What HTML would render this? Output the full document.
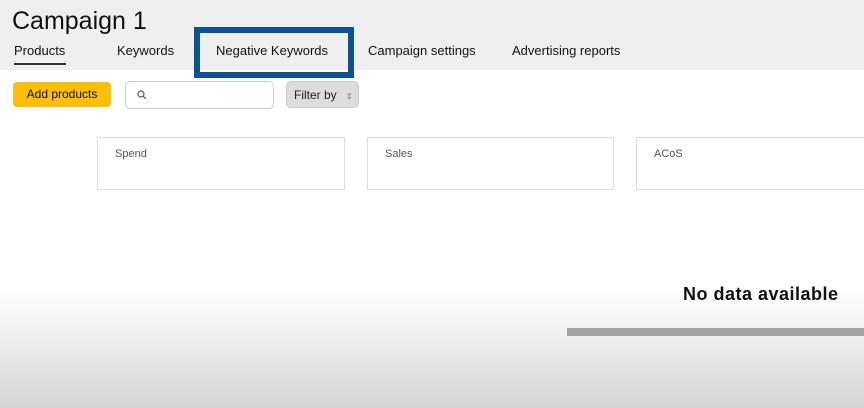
<!DOCTYPE html>
<html><head><style>
body{margin:0;width:864px;height:408px;overflow:hidden;position:relative;font-family:"Liberation Sans",sans-serif;background:linear-gradient(#fff 0,#fff 285px,#f2f2f2 330px,#d4d4d4 408px);}
.hdr{position:absolute;left:0;top:0;width:864px;height:70px;background:#efefef;}
.t{position:absolute;left:12px;top:7px;font-size:25px;color:#111;}
.tab{position:absolute;top:43px;font-size:13px;color:#111;}
.ul{position:absolute;left:14px;top:63px;width:52px;height:2px;background:#333;}
.box{position:absolute;left:194px;top:27px;width:148px;height:39px;border:6px solid #0b5394;}
.btn{position:absolute;left:13px;top:82px;width:98px;height:25px;background:#fbbf0a;border-radius:4px;font-size:12px;text-align:center;line-height:25px;color:#111;}
.srch{position:absolute;left:125px;top:81px;width:147px;height:26px;border:1px solid #ccc;border-radius:5px;background:#fff;}
.flt{position:absolute;left:286px;top:81px;width:73px;height:27px;background:#ddd;border:1px solid #ccc;border-radius:5px;font-size:12px;line-height:27px;color:#222;box-sizing:border-box;padding-left:7px;}
.card{position:absolute;top:137px;height:53px;border:1px solid #ddd;background:#fff;box-sizing:border-box;font-size:11px;color:#555;padding:10px 0 0 17px;}
.nd{position:absolute;left:683px;top:284px;font-size:18px;font-weight:bold;color:#111;letter-spacing:0.5px;}
.bar{position:absolute;left:567px;top:328px;width:297px;height:8px;background:#a3a3a3;}
</style></head><body>
<div class="hdr"></div>
<div class="t">Campaign 1</div>
<div class="tab" style="left:14px">Products</div>
<div class="ul"></div>
<div class="tab" style="left:117px">Keywords</div>
<div class="tab" style="left:216px">Negative Keywords</div>
<div class="tab" style="left:368px">Campaign settings</div>
<div class="tab" style="left:512px">Advertising reports</div>
<div class="box"></div>
<div class="btn">Add products</div>
<div class="srch"><svg width="10" height="10" style="position:absolute;left:11px;top:8px" viewBox="0 0 10 10"><circle cx="4" cy="4" r="3" fill="none" stroke="#555" stroke-width="1.2"/><line x1="6.2" y1="6.2" x2="9" y2="9" stroke="#555" stroke-width="1.2"/></svg></div>
<div class="flt">Filter by <span style="font-size:8px;color:#777;margin-left:6px">&#8661;</span></div>
<div class="card" style="left:97px;width:248px">Spend</div>
<div class="card" style="left:367px;width:247px">Sales</div>
<div class="card" style="left:636px;width:240px">ACoS</div>
<div class="nd">No data available</div>
<div class="bar"></div>
</body></html>
